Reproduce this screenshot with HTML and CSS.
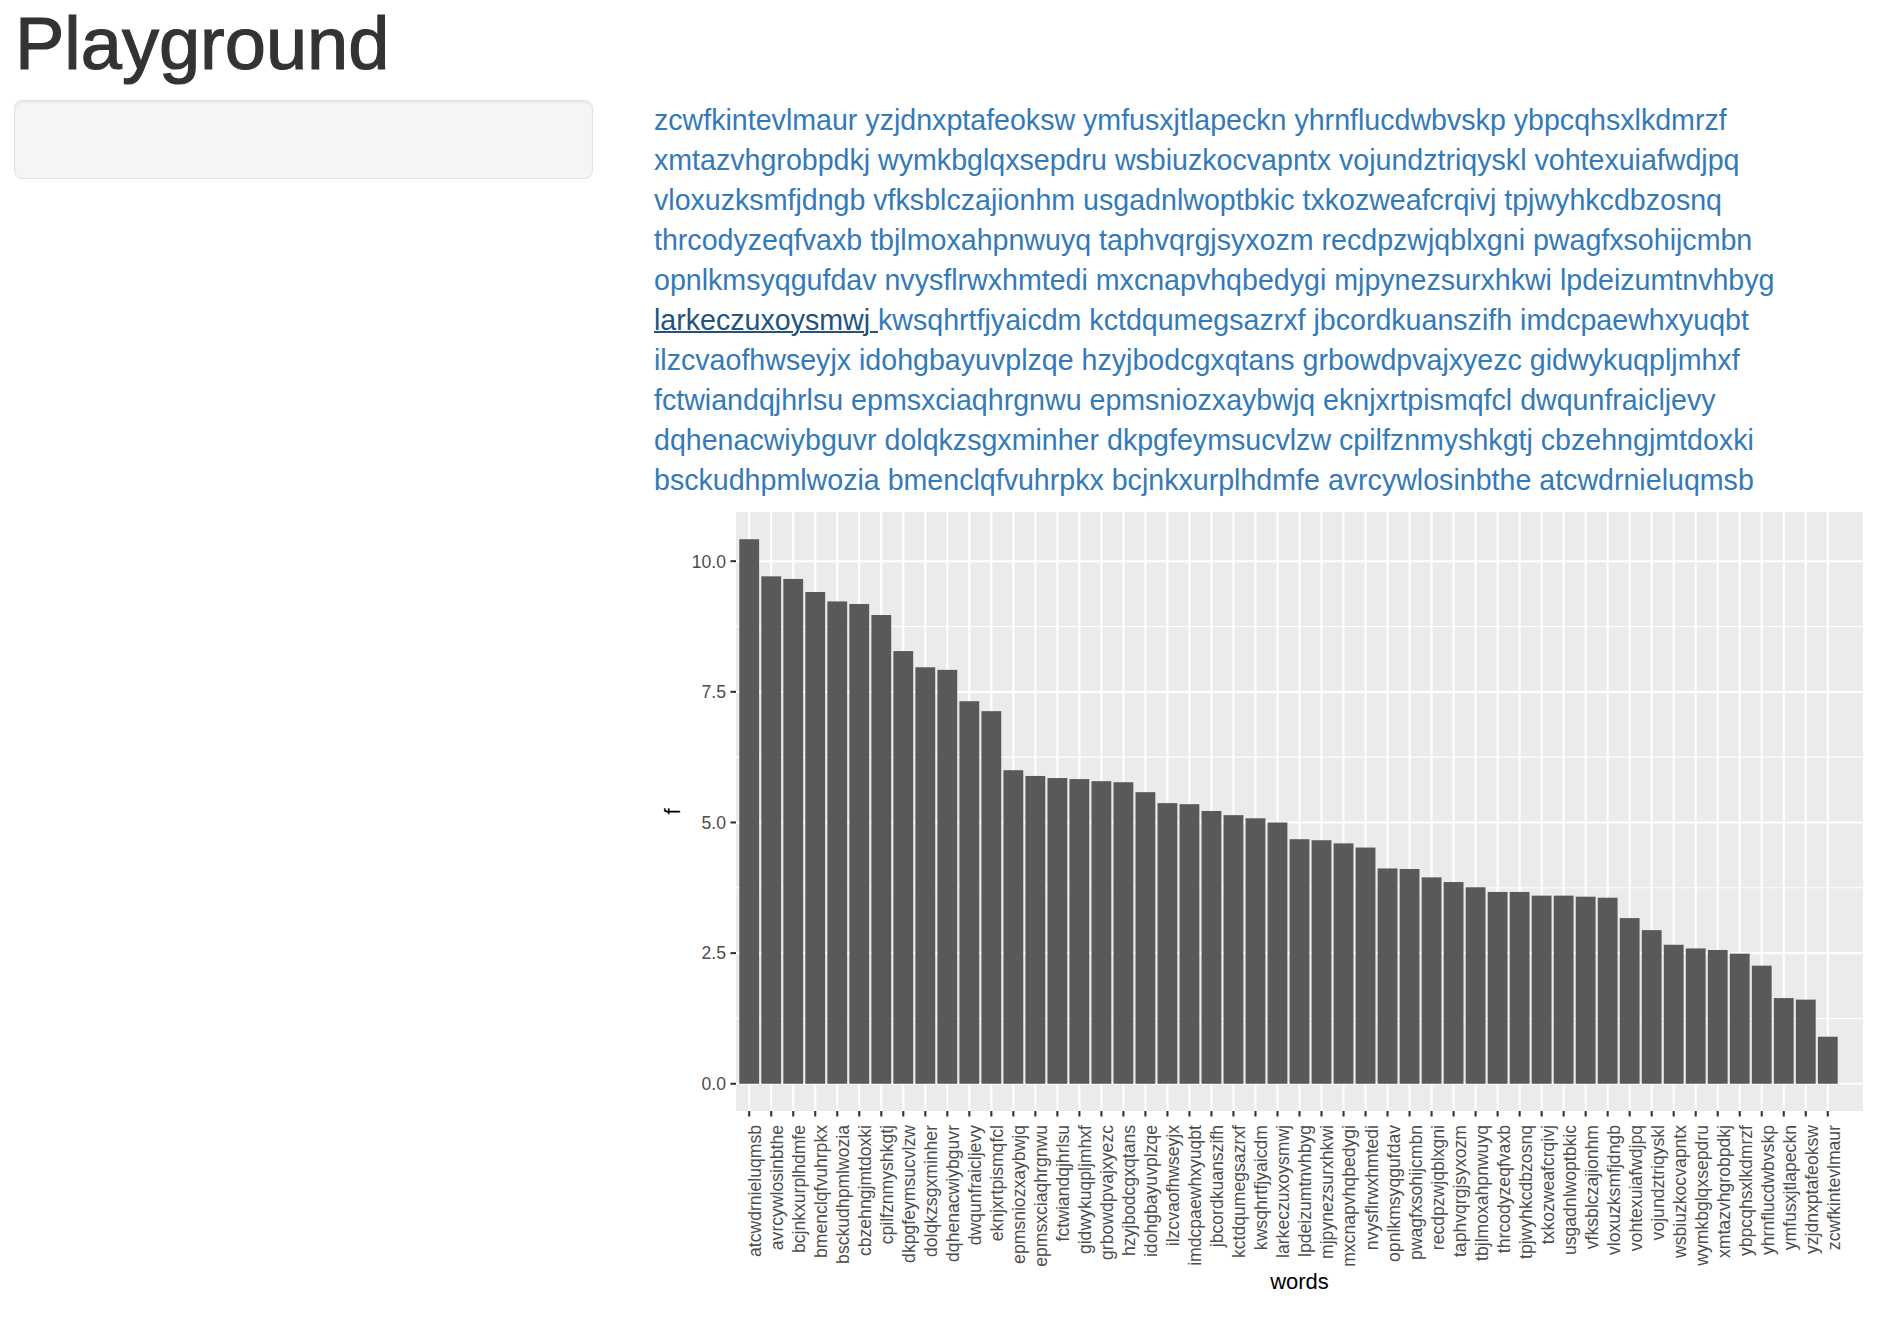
FILE: index.html
```html
<!DOCTYPE html>
<html lang="en">
	<head>
		<title>Playground</title>
		<meta charset="utf-8">
		<meta name="viewport" content="width=device-width, initial-scale=1">
		<link rel="stylesheet" href="styles.css">
	</head>
	<body>
		<div class="page">

			<h1 class="title">Playground</h1>

			<div class="layout">

				<div class="sidebar">
					<div class="well"></div>
				</div>

				<div class="main">
					<div class="words">
						<a href="#">zcwfkintevlmaur </a>
						<a href="#">yzjdnxptafeoksw </a>
						<a href="#">ymfusxjtlapeckn </a>
						<a href="#">yhrnflucdwbvskp </a>
						<a href="#">ybpcqhsxlkdmrzf </a>
						<a href="#">xmtazvhgrobpdkj </a>
						<a href="#">wymkbglqxsepdru </a>
						<a href="#">wsbiuzkocvapntx </a>
						<a href="#">vojundztriqyskl </a>
						<a href="#">vohtexuiafwdjpq </a>
						<a href="#">vloxuzksmfjdngb </a>
						<a href="#">vfksblczajionhm </a>
						<a href="#">usgadnlwoptbkic </a>
						<a href="#">txkozweafcrqivj </a>
						<a href="#">tpjwyhkcdbzosnq </a>
						<a href="#">thrcodyzeqfvaxb </a>
						<a href="#">tbjlmoxahpnwuyq </a>
						<a href="#">taphvqrgjsyxozm </a>
						<a href="#">recdpzwjqblxgni </a>
						<a href="#">pwagfxsohijcmbn </a>
						<a href="#">opnlkmsyqgufdav </a>
						<a href="#">nvysflrwxhmtedi </a>
						<a href="#">mxcnapvhqbedygi </a>
						<a href="#">mjpynezsurxhkwi </a>
						<a href="#">lpdeizumtnvhbyg </a>
						<a href="#" class="is-focus">larkeczuxoysmwj </a>
						<a href="#">kwsqhrtfjyaicdm </a>
						<a href="#">kctdqumegsazrxf </a>
						<a href="#">jbcordkuanszifh </a>
						<a href="#">imdcpaewhxyuqbt </a>
						<a href="#">ilzcvaofhwseyjx </a>
						<a href="#">idohgbayuvplzqe </a>
						<a href="#">hzyjbodcgxqtans </a>
						<a href="#">grbowdpvajxyezc </a>
						<a href="#">gidwykuqpljmhxf </a>
						<a href="#">fctwiandqjhrlsu </a>
						<a href="#">epmsxciaqhrgnwu </a>
						<a href="#">epmsniozxaybwjq </a>
						<a href="#">eknjxrtpismqfcl </a>
						<a href="#">dwqunfraicljevy </a>
						<a href="#">dqhenacwiybguvr </a>
						<a href="#">dolqkzsgxminher </a>
						<a href="#">dkpgfeymsucvlzw </a>
						<a href="#">cpilfznmyshkgtj </a>
						<a href="#">cbzehngjmtdoxki </a>
						<a href="#">bsckudhpmlwozia </a>
						<a href="#">bmenclqfvuhrpkx </a>
						<a href="#">bcjnkxurplhdmfe </a>
						<a href="#">avrcywlosinbthe </a>
						<a href="#">atcwdrnieluqmsb </a>
					</div>

					<svg id="plot" class="plot" width="1220" height="800" viewBox="0 0 1220 800"></svg>
				</div>

			</div>
		</div>

		<script src="chart.js"></script>
	</body>
</html>
```

FILE: styles.css
```css
/*
 * RESET
 */
* { box-sizing: border-box; }
html, body { margin: 0; padding: 0; background: #fff; }
body { font-family: "Liberation Sans", Arial, sans-serif; color: #333; }
a { text-decoration: none; }

/*
 * LAYOUT
 * .page > .title
 * .page > .layout > .sidebar / .main
 */
.page { padding: 0 15px 0 12px; }

.title {
	margin: 3px 0 0 0; padding-left: 3px;
	font-size: 74px; font-weight: normal; line-height: 1.1;
	color: #333;
	-webkit-text-stroke: 1.2px #333; /* helvetica reads a touch heavier */
}

.layout {
	display: grid;
	grid-template-columns: 581px 1fr;
	column-gap: 61px;
	margin-top: 16px;
}

.sidebar { padding-left: 2px; }

.well {
	height: 79px;
	background-color: #f5f5f5;
	border: 1px solid #e3e3e3;
	border-radius: 8px;
	box-shadow: inset 0 2px 2px rgba(0, 0, 0, .05);
}

.main { min-width: 0; }

.words {
	font-size: 28.6px; line-height: 40px;
}
.words a { color: #337ab7; }
.words a.is-focus {
	color: #23527c;
	text-decoration: underline;
	text-decoration-thickness: 2px;
}

.plot { display: block; }

/*
 * PLOT
 */
.plot text { font-family: "Liberation Sans", Arial, sans-serif; }
.plot .axis-text { font-size: 17.6px; fill: #4d4d4d; }
.plot .axis-title { font-size: 22px; fill: #000; }
.plot .panel { fill: #ebebeb; }
.plot .grid-major { stroke: #fff; stroke-width: 2.1; }
.plot .grid-minor { stroke: #fff; stroke-width: 1.07; }
.plot .bar { fill: #595959; }
.plot .tick { stroke: #333; stroke-width: 2.1; }
```

FILE: chart.js
```js
new function(){

	var words = [
		"atcwdrnieluqmsb", "avrcywlosinbthe", "bcjnkxurplhdmfe", "bmenclqfvuhrpkx", "bsckudhpmlwozia",
		"cbzehngjmtdoxki", "cpilfznmyshkgtj", "dkpgfeymsucvlzw", "dolqkzsgxminher", "dqhenacwiybguvr",
		"dwqunfraicljevy", "eknjxrtpismqfcl", "epmsniozxaybwjq", "epmsxciaqhrgnwu", "fctwiandqjhrlsu",
		"gidwykuqpljmhxf", "grbowdpvajxyezc", "hzyjbodcgxqtans", "idohgbayuvplzqe", "ilzcvaofhwseyjx",
		"imdcpaewhxyuqbt", "jbcordkuanszifh", "kctdqumegsazrxf", "kwsqhrtfjyaicdm", "larkeczuxoysmwj",
		"lpdeizumtnvhbyg", "mjpynezsurxhkwi", "mxcnapvhqbedygi", "nvysflrwxhmtedi", "opnlkmsyqgufdav",
		"pwagfxsohijcmbn", "recdpzwjqblxgni", "taphvqrgjsyxozm", "tbjlmoxahpnwuyq", "thrcodyzeqfvaxb",
		"tpjwyhkcdbzosnq", "txkozweafcrqivj", "usgadnlwoptbkic", "vfksblczajionhm", "vloxuzksmfjdngb",
		"vohtexuiafwdjpq", "vojundztriqyskl", "wsbiuzkocvapntx", "wymkbglqxsepdru", "xmtazvhgrobpdkj",
		"ybpcqhsxlkdmrzf", "yhrnflucdwbvskp", "ymfusxjtlapeckn", "yzjdnxptafeoksw", "zcwfkintevlmaur"
	];

	var f = [
		10.42, 9.71, 9.66, 9.41, 9.23, 9.18, 8.97, 8.28, 7.97, 7.92,
		7.32, 7.13, 6.00, 5.89, 5.85, 5.83, 5.79, 5.77, 5.58, 5.37,
		5.35, 5.22, 5.14, 5.08, 5.00, 4.68, 4.66, 4.60, 4.52, 4.12,
		4.11, 3.95, 3.86, 3.76, 3.67, 3.67, 3.60, 3.60, 3.58, 3.56,
		3.17, 2.94, 2.66, 2.59, 2.56, 2.49, 2.26, 1.64, 1.61, 0.90
	];

	var NS = "http://www.w3.org/2000/svg";
	var svg = document.getElementById("plot");

	// panel box inside the 1220x800 plot
	var panel = { x: 82, y: 12, w: 1127, h: 599 };

	var ymax = 10.42, pad = ymax * 0.05;
	var lo = -pad, hi = ymax + pad;
	var step = panel.w / (words.length + 1.2);

	function sy(v){ return panel.y + panel.h - (v - lo) / (hi - lo) * panel.h; }
	function sx(i){ return panel.x + (i + 0.6) * step; }

	function el(name, attrs, text){
		var node = document.createElementNS(NS, name);
		for (var k in attrs) node.setAttribute(k, attrs[k]);
		if (text !== undefined) node.textContent = text;
		svg.appendChild(node);
		return node;
	}

	function hline(v, cls){
		el("line", { "class": cls, x1: panel.x, x2: panel.x + panel.w, y1: sy(v), y2: sy(v) });
	}

	el("rect", { "class": "panel", x: panel.x, y: panel.y, width: panel.w, height: panel.h });

	[1.25, 3.75, 6.25, 8.75].forEach(function(v){ hline(v, "grid-minor"); });
	[0, 2.5, 5, 7.5, 10].forEach(function(v){ hline(v, "grid-major"); });

	words.forEach(function(w, i){
		el("line", { "class": "grid-major", x1: sx(i), x2: sx(i), y1: panel.y, y2: panel.y + panel.h });
	});

	f.forEach(function(v, i){
		var bw = step * 0.9;
		el("rect", { "class": "bar", x: sx(i) - bw / 2, y: sy(v), width: bw, height: sy(0) - sy(v) });
	});

	// y axis
	["0.0", "2.5", "5.0", "7.5", "10.0"].forEach(function(label){
		var y = sy(parseFloat(label));
		el("line", { "class": "tick", x1: panel.x - 5.5, x2: panel.x, y1: y, y2: y });
		el("text", { "class": "axis-text", x: panel.x - 10, y: y, dy: "0.36em", "text-anchor": "end" }, label);
	});

	// x axis
	var base = panel.y + panel.h;
	words.forEach(function(w, i){
		var x = sx(i);
		el("line", { "class": "tick", x1: x, x2: x, y1: base, y2: base + 5.5 });
		el("text", {
			"class": "axis-text",
			transform: "translate(" + x + "," + (base + 14) + ") rotate(-90)",
			dy: "0.68em", "text-anchor": "end"
		}, w);
	});

	el("text", { "class": "axis-title", x: panel.x + panel.w / 2, y: 789, "text-anchor": "middle" }, "words");
	el("text", {
		"class": "axis-title",
		transform: "translate(26," + (panel.y + panel.h / 2) + ") rotate(-90)",
		"text-anchor": "middle"
	}, "f");

};
```
